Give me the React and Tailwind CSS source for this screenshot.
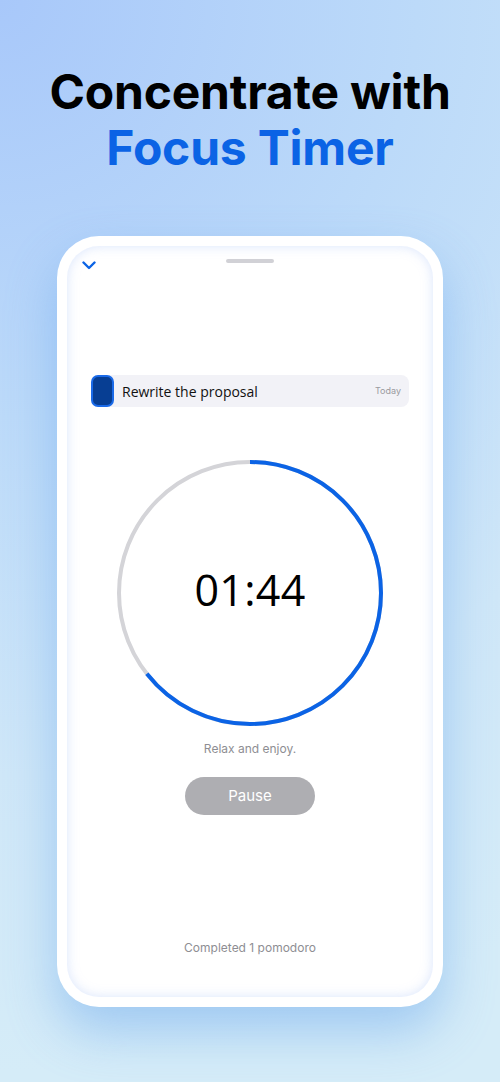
export default function App() {
  const r = 131
  const c = 2 * Math.PI * r
  const done = 0.644

  return (
    <div
      className="relative w-[500px] h-[1082px] overflow-hidden bg-[radial-gradient(circle_at_0%_0%,#a8c8fa_0%,#bcdaf9_35%,#cfe7f8_65%,#d5ecf8_90%)]"
      style={{ fontFamily: 'Inter, "Noto Sans", sans-serif' }}
    >
      <div className="flex flex-col items-center pt-[64px]">
        <h1 className="text-center text-[48px] leading-[56px] font-bold tracking-[-0.2px] text-black">
          Concentrate with
          <br />
          <span className="text-[#0b63e5]">Focus Timer</span>
        </h1>
      </div>

      <div className="mt-[60px] mx-[57px] w-[386px] h-[771px] rounded-[42px] bg-white p-[10px] shadow-[0_24px_50px_rgba(96,160,235,0.45)]">
        <div className="flex flex-col h-full rounded-[32px] bg-white shadow-[inset_0_0_12px_rgba(150,180,245,0.35)]">
          <div className="grid grid-cols-3 items-start px-[15px] pt-[13px]">
            <svg width="14" height="9" viewBox="0 0 14 9" className="mt-[2px]">
              <path d="M1.5 1.5 L7 7 L12.5 1.5" fill="none" stroke="#0b63e5" strokeWidth="2.4" strokeLinecap="round" strokeLinejoin="round" />
            </svg>
            <div className="justify-self-center w-[48px] h-[4px] rounded-full bg-[#d1d1d6]" />
          </div>

          <div className="mt-[105px] mx-[24px] flex items-center h-[32px] rounded-[8px] bg-[#f2f2f7] pr-[8px]">
            <div className="w-[23px] h-[32px] rounded-[7px] bg-[#073e93] border-2 border-[#1a6ae8]" />
            <span className="ml-[8px] text-[14px] text-[#111]" style={{ fontFamily: '"Open Sans", sans-serif' }}>
              Rewrite the proposal
            </span>
            <span className="ml-auto text-[9px] text-[#9a9aa0]">Today</span>
          </div>

          <div className="mt-[52px] flex justify-center">
            <div className="relative w-[268px] h-[268px]">
              <svg width="268" height="268" viewBox="0 0 268 268">
                <circle cx="134" cy="134" r={r} fill="none" stroke="#d4d4d8" strokeWidth="4" />
                <circle
                  cx="134"
                  cy="134"
                  r={r}
                  fill="none"
                  stroke="#0b63e5"
                  strokeWidth="4"
                  strokeDasharray={`${c * done} ${c}`}
                  transform="rotate(-90 134 134)"
                />
              </svg>
              <div className="absolute inset-0 flex items-center justify-center pb-[6px]">
                <span className="text-[43px] text-black tracking-[0.3px]" style={{ fontFamily: '"Open Sans", sans-serif' }}>
                  01:44
                </span>
              </div>
            </div>
          </div>

          <p className="mt-[13px] text-center text-[12px] text-[#8e8e93]">Relax and enjoy.</p>

          <div className="mt-[19px] flex justify-center">
            <button className="w-[130px] h-[38px] rounded-full bg-[#aeaeb2] text-white text-[15px]">Pause</button>
          </div>

          <p className="mt-[124px] text-center text-[12px] text-[#8e8e93]">Completed 1 pomodoro</p>
        </div>
      </div>
    </div>
  )
}
